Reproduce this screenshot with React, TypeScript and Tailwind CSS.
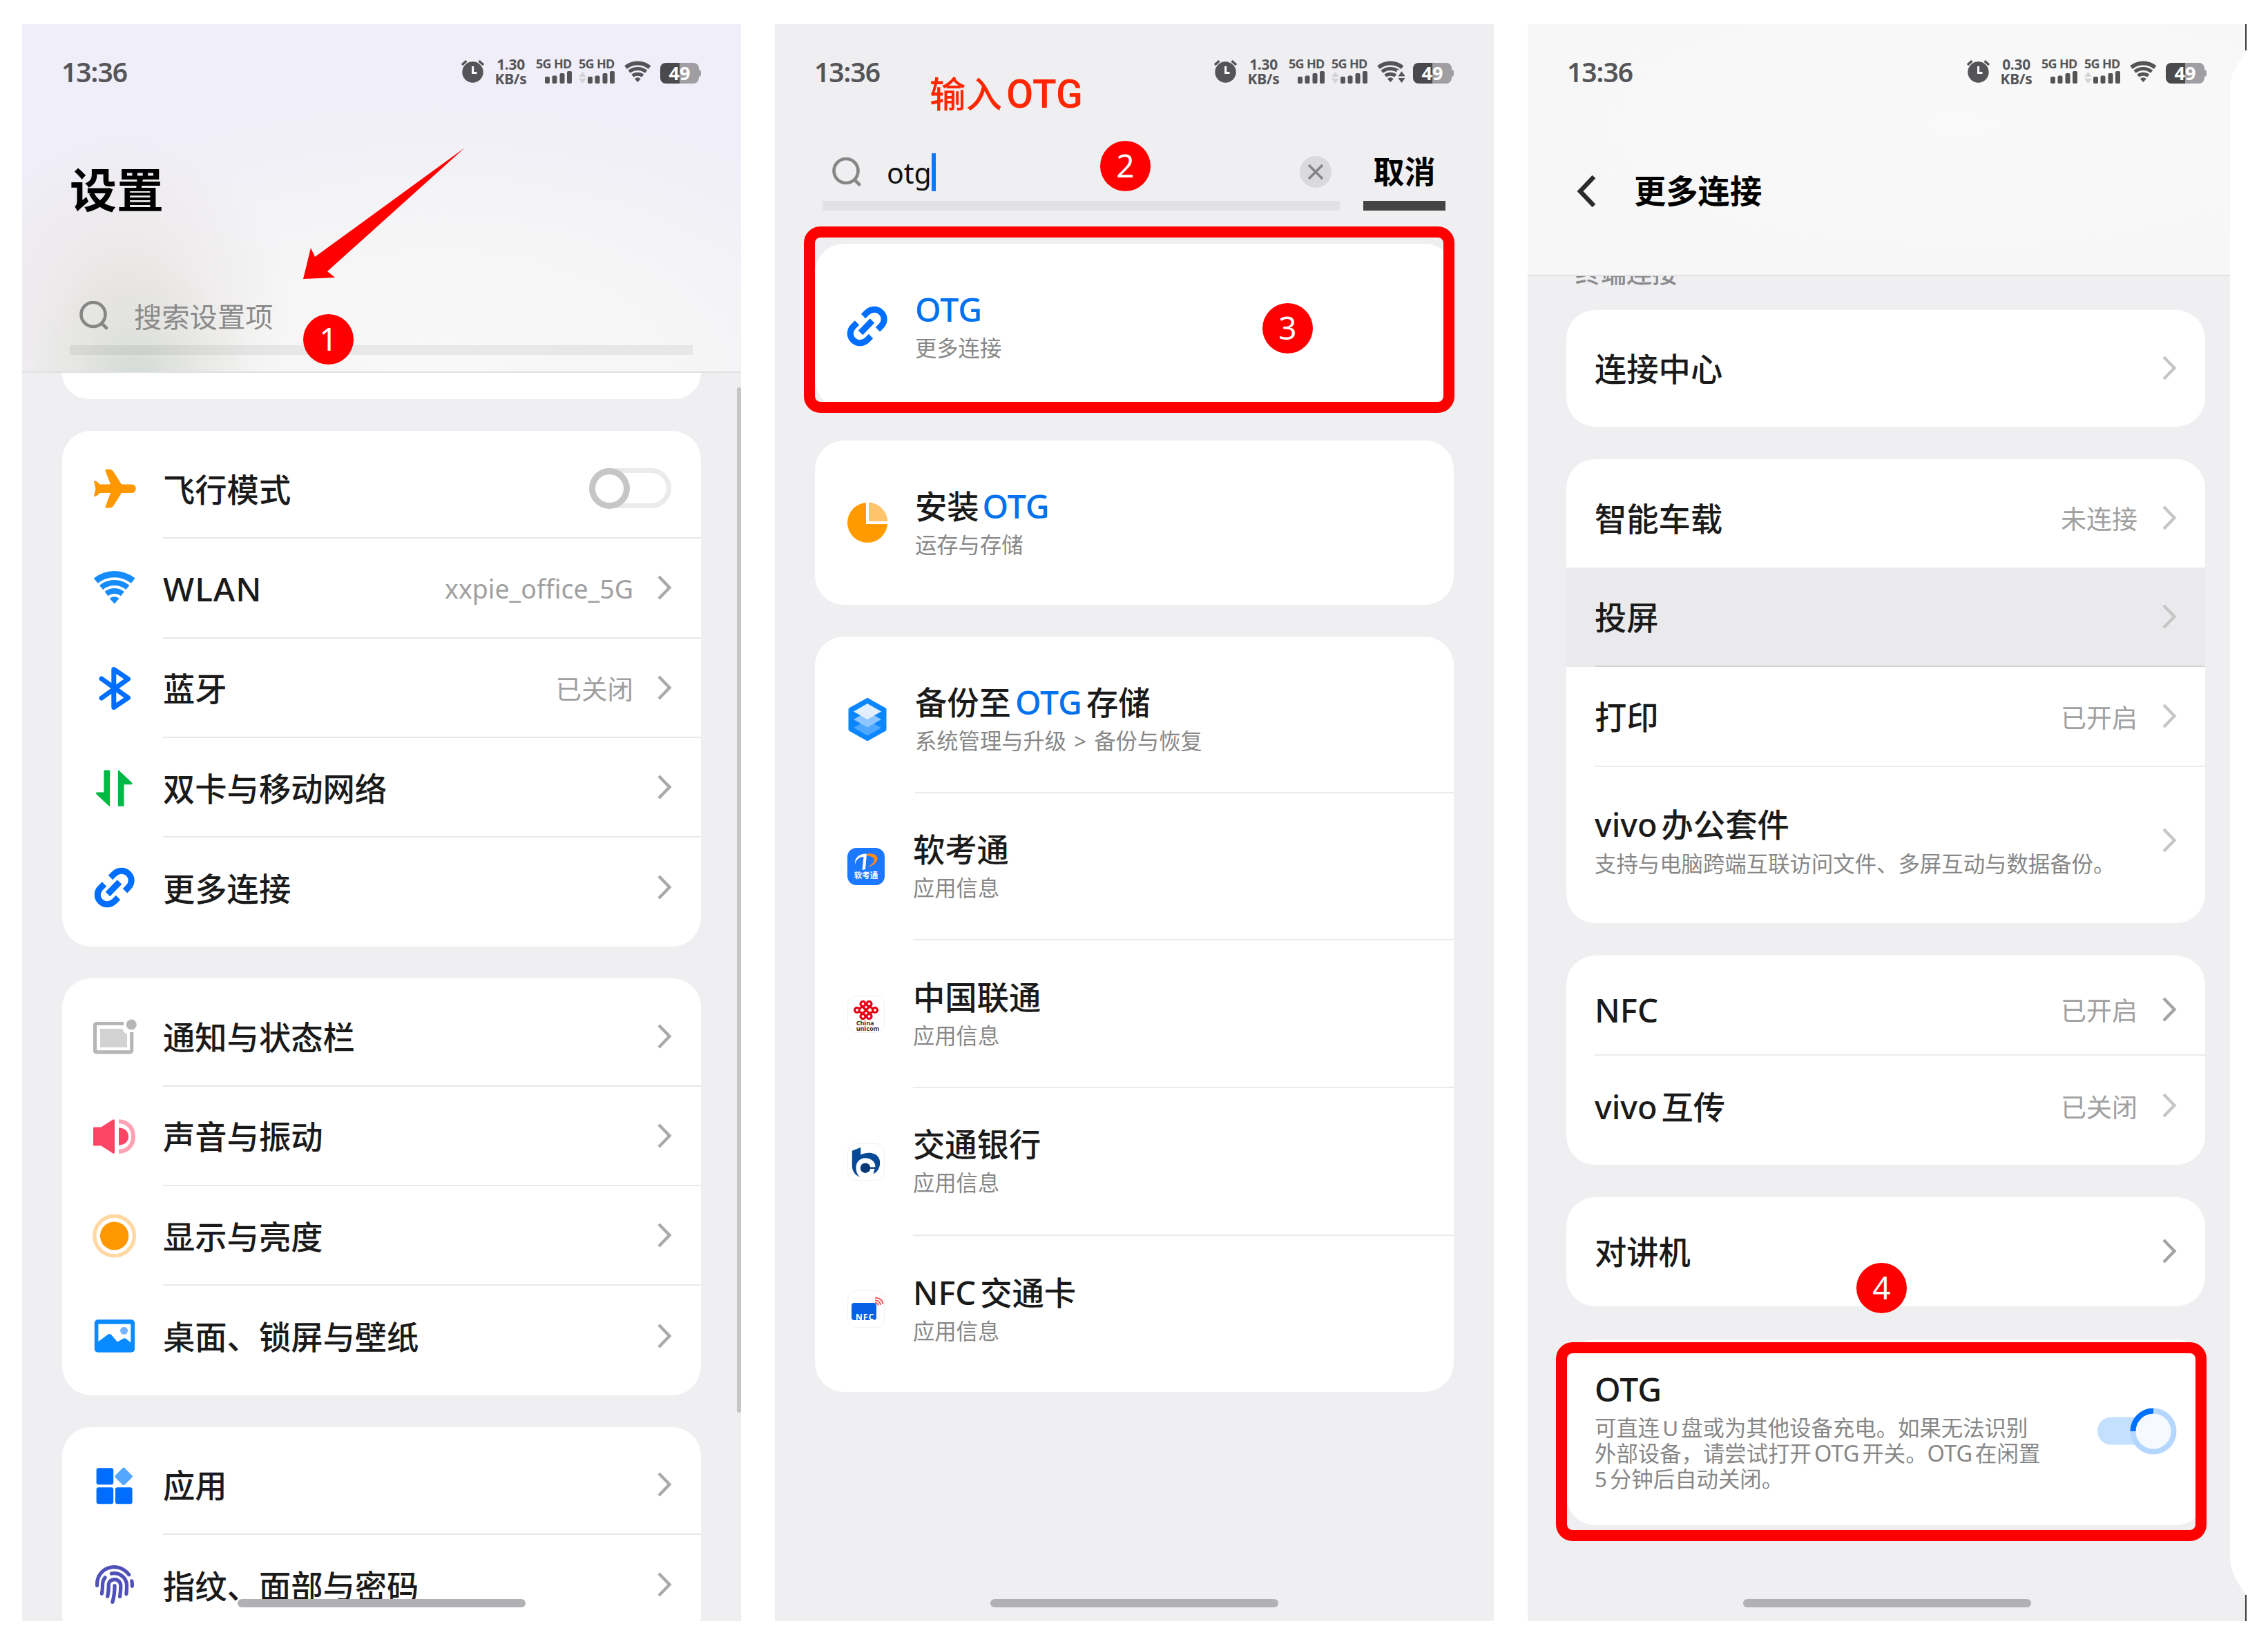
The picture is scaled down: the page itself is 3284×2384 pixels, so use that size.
import React from "react";
import { FaFingerprint } from "react-icons/fa";

type Kids = { children?: React.ReactNode };

/* ---------- shared glyphs ---------- */

function WifiShape() {
  return (
    <g fill="none" stroke="currentColor">
      <path d="M4.7 21.1A43 43 0 0 1 58.7 21.1" strokeWidth="9.2" />
      <path d="M12.5 30.8A30.5 30.5 0 0 1 50.9 30.8" strokeWidth="8" />
      <path d="M20.1 40.1A18.5 18.5 0 0 1 43.3 40.1" strokeWidth="8" />
      <path d="M25.4 46.9A10 10 0 0 1 38 46.9L31.7 54Z" fill="currentColor" strokeWidth="1" />
    </g>
  );
}

function Chevron({ tone = "text-[#a9a9a9]" }: { tone?: string }) {
  return (
    <svg viewBox="0 0 22 36" className={`h-[36px] w-[22px] shrink-0 ${tone}`} fill="none">
      <path d="M3 2L18.5 18L3 34" stroke="currentColor" strokeWidth="4.4" />
    </svg>
  );
}

function SearchIcon() {
  return (
    <svg viewBox="0 0 42 42" className="h-[42px] w-[42px] shrink-0" fill="none" stroke="#868686" strokeWidth="4.6">
      <circle cx="20" cy="19.5" r="17.5" />
      <path d="M31 31L40.5 40.5" />
    </svg>
  );
}

function Bars() {
  return (
    <svg viewBox="0 0 39 18" className="h-[18px] w-[39px]" fill="#555558">
      <rect x="0" y="8" width="7" height="10" rx="2" />
      <rect x="10.5" y="6.5" width="7" height="11.5" rx="2" />
      <rect x="21.5" y="3" width="7" height="15" rx="2" />
      <rect x="32" y="0" width="7" height="18" rx="2" />
    </svg>
  );
}

function Sim({ arrows }: { arrows?: boolean }) {
  return (
    <div className="flex w-[52px] flex-col items-end">
      <span className="w-[52px] text-[18px] leading-[18px] font-bold tracking-[-0.7px] whitespace-nowrap">5G HD</span>
      <div className="mt-[2px] flex items-end justify-end">
        {arrows && (
          <svg viewBox="0 0 11 17" className="mr-[2px] h-[17px] w-[11px]" fill="#d2d1d6">
            <path d="M5.5 0L11 7.2H0ZM5.5 17L11 9.8H0Z" />
          </svg>
        )}
        <Bars />
      </div>
    </div>
  );
}

function StatusBar({ speed, busyWifi }: { speed: string; busyWifi?: boolean }) {
  return (
    <div className="flex h-[88px] shrink-0 items-start justify-between pt-[48px] pr-[58px] pl-[57px] text-[#555558]">
      <span className="mt-[1px] text-[39px] leading-[40px] font-semibold tracking-[-1px]">13:36</span>
      <div className="flex h-[40px] items-start">
        <svg viewBox="0 0 33 33" className="mt-[4px] h-[33px] w-[33px]">
          <circle cx="16.5" cy="17.5" r="15.2" fill="currentColor" />
          <path d="M1 7L7.5 1.2M32 7L25.5 1.2" stroke="currentColor" strokeWidth="3.4" />
          <path d="M16.6 9V18.4H22.5" stroke="#fff" strokeWidth="3" fill="none" />
        </svg>
        <div className="ml-[16px] flex w-[45px] flex-col items-center text-[21px] leading-[20.5px] font-bold tracking-[-0.3px]">
          <span>{speed}</span>
          <span>KB/s</span>
        </div>
        <div className="ml-[14px]">
          <Sim />
        </div>
        <div className="ml-[10px]">
          <Sim arrows />
        </div>
        <svg viewBox="0 6 64 50" className="mt-[5px] ml-[13px] h-[32px] w-[41px]" preserveAspectRatio="none">
          <WifiShape />
          {busyWifi && (
            <g>
              <rect x="46" y="27" width="20" height="30" fill="#efeff1" />
              <path d="M57 30L65 41H49ZM57 56L65 45H49Z" fill="currentColor" />
            </g>
          )}
        </svg>
        <div className="mt-[8px] ml-[12px] flex items-center">
          <div className="flex h-[30px] w-[56px] items-center justify-center rounded-[8px] bg-[linear-gradient(90deg,#4a4a4c_50%,#9f9ea3_50%)] text-[27px] leading-[30px] font-bold text-white">
            49
          </div>
          <div className="h-[10px] w-[3px] rounded-r-[3px] bg-[#9f9ea3]" />
        </div>
      </div>
    </div>
  );
}

function HomeBar() {
  return <div className="absolute top-[2281px] left-[312px] h-[12px] w-[417px] rounded-full bg-[#b1b1b3]" />;
}

function Badge({ n, at }: { n: number; at: string }) {
  return (
    <div
      className={`absolute flex h-[73px] w-[73px] items-center justify-center rounded-full bg-[#ff0000] text-[46px] leading-[70px] text-white ${at}`}
    >
      <span className="-mt-[4px]">{n}</span>
    </div>
  );
}

/* ---------- setting icons (64 x 64) ---------- */

function Icon({ children }: Kids) {
  return (
    <svg viewBox="0 0 64 64" className="h-[64px] w-[64px] shrink-0" fill="none">
      {children}
    </svg>
  );
}

const PlaneIcon = () => (
  <Icon>
    <path
      fill="#ff9800"
      d="M62.7 31.8Q62.7 25.6 56 25.6H42L30 6.5Q28.2 3.8 24.5 3.8H20.5Q18 3.9 18.7 6.2L26 25.6H10.5L6 21.3Q4.3 20 1.900 21.200L4.500 31.800L1.900 42.400Q4.300 43.600 6 42.300L10.500 38H26L18.700 57.400Q18 59.700 20.500 59.800H24.500Q28.200 59.800 30 57.100L42 38H56Q62.700 38 62.700 31.800Z"
    />
  </Icon>
);
const WlanIcon = () => (
  <svg viewBox="0 0 64 64" className="h-[64px] w-[64px] shrink-0 text-[#158bfc]">
    <WifiShape />
  </svg>
);
const BluetoothIcon = () => (
  <Icon>
    <path
      d="M13 18L51.5 45.7L30.8 59.5V4.5L51.5 18.3L13 46"
      stroke="#006eff"
      strokeWidth="7"
      strokeLinejoin="round"
      strokeLinecap="round"
    />
  </Icon>
);
const DataIcon = () => (
  <Icon>
    <g fill="#00b843" stroke="#00b843" strokeWidth="1.5" strokeLinejoin="round">
      <path d="M17.2 7.3H24.4V58L6 40.8V39.3H17.2Z" />
      <path d="M37.6 7.3L56.5 25V26.5H44.8V58H37.6Z" />
    </g>
  </Icon>
);
const LinkIcon = () => (
  <Icon>
    <g stroke="#006eff" strokeWidth="9" strokeLinejoin="round">
      <path d="M26 18L31 13C37 7 46.5 6.8 52 12.5C57.5 18 57.5 26.5 52 32.2L47 37.2" />
      <path d="M17 27.5L11.5 33C5.8 38.7 5.8 47.2 11.5 52.7C17 58.2 26 58 31.5 52.5L37 47" />
      <path d="M22 42L39 24.5" />
    </g>
  </Icon>
);
const NoticeIcon = () => (
  <Icon>
    <path d="M45 12.5H6Q3.5 12.5 3.5 15V51Q3.5 53.8 6 53.8H54Q56.7 53.8 56.7 51V25" stroke="#b6b6b6" strokeWidth="5.2" />
    <path d="M11 20H43Q45 26 50 27.5V47H11Z" fill="#d2d2d2" />
    <circle cx="56.3" cy="14" r="7.5" fill="#b6b6b6" />
  </Icon>
);
const SoundIcon = () => (
  <Icon>
    <path d="M1 19.5Q1 18.5 2 18.5H12.5L29.5 7.5Q32 6.500 32 9V55Q32 57.600 29.500 56.500L12.500 45.500H2Q1 45.500 1 44.500Z" fill="#ff4566" />
    <path d="M38 19Q52 21 52 32Q52 43 38 45Z" fill="#ff4566" />
    <path d="M38 10.2C50 10.2 59 19 59 32C59 45 50 53.8 38 53.8" stroke="#ffa3b4" strokeWidth="6" />
  </Icon>
);
const DisplayIcon = () => (
  <Icon>
    <circle cx="31.6" cy="32" r="28.8" stroke="#ffd8a4" strokeWidth="5.4" />
    <circle cx="31.6" cy="32" r="20.6" fill="#ff9800" />
  </Icon>
);
const WallpaperIcon = () => (
  <Icon>
    <rect x="2.8" y="8.3" width="58.3" height="47.4" rx="5" fill="#0a8aff" />
    <path d="M8.4 14.7H55.4V41.6L48.5 36Q46.3 34.5 44 36L36 40.5L27 30Q24.5 28 22 30L8.4 40Z" fill="#fff" />
    <circle cx="45.6" cy="24.3" r="5.5" fill="#72b4ff" />
  </Icon>
);
const AppsIcon = () => (
  <Icon>
    <g fill="#006dff">
      <rect x="5.6" y="7.3" width="24.6" height="24" rx="3" />
      <rect x="5.6" y="35.2" width="24.6" height="24" rx="3" />
      <rect x="33" y="35.2" width="24.6" height="24" rx="3" />
    </g>
    <rect x="35.3" y="9.7" width="19.4" height="19.4" rx="2.5" transform="rotate(45 45 19.4)" fill="#54a6ff" />
  </Icon>
);
const FingerprintIcon = () => (
  <span className="flex h-[64px] w-[64px] shrink-0 items-center justify-center text-[56px] text-[#4f50b8]">
    <FaFingerprint />
  </span>
);
const PieIcon = () => (
  <Icon>
    <circle cx="32" cy="32" r="29" fill="#ff9a00" />
    <path d="M32 32V2.5A29.5 29.5 0 0 1 61.5 32Z" fill="#ffc36c" />
    <path d="M32 1V32H63" stroke="#fff" strokeWidth="4" />
  </Icon>
);
const BackupIcon = () => (
  <Icon>
    <path d="M32 3.5L57 17.5V46.5L32 60.5L7 46.5V17.5Z" fill="#0b86ff" stroke="#0b86ff" strokeWidth="5" strokeLinejoin="round" />
    <path d="M32 32.5L52 44L32 55.5L12 44Z" fill="#4ea8ff" />
    <path d="M32 20.5L52 32L32 43.5L12 32Z" fill="#8fc6ff" />
    <path d="M32 9L52 20.5L32 32L12 20.5Z" fill="#e2efff" />
  </Icon>
);

/* ---------- app icons (54 x 54) ---------- */

const RuankaoIcon = () => (
  <div className="flex h-[54px] w-[54px] flex-col items-center rounded-[13px] bg-[#1c78ff]">
    <svg viewBox="0 0 54 32" className="h-[32px] w-[54px]">
      <path d="M11 24C10 14 17 8.500 28 8.500L26 31L21.500 32L23.500 13C17 13 12.500 17 11 24Z" fill="#fff" />
      <path d="M29 8.500C39 7.500 45 11 43 18C41 23 35 27 29 28C36 24 40 20 38.500 16C37 12.500 33 12 28.500 12Z" fill="#ff8a1c" />
    </svg>
    <span className="mt-[1px] text-[11.5px] leading-[13px] font-bold whitespace-nowrap text-white">软考通</span>
  </div>
);
const UnicomIcon = () => (
  <div className="flex h-[54px] w-[54px] flex-col items-center rounded-[13px] border border-[#f1f1f1] bg-white">
    <svg viewBox="0 0 36 28" className="mt-[6px] h-[28px] w-[36px]" fill="none" stroke="#e60012" strokeWidth="3.2">
      <circle cx="13.5" cy="5" r="3.500" />
      <circle cx="22.5" cy="5" r="3.500" />
      <circle cx="13.5" cy="23" r="3.500" />
      <circle cx="22.5" cy="23" r="3.500" />
      <circle cx="5" cy="14" r="3.500" />
      <circle cx="31" cy="14" r="3.500" />
      <path d="M8 12L15 7.500M28 12L21 7.500M8 16L15 20.500M28 16L21 20.500M12 8L24 20M24 8L12 20" />
    </svg>
    <div className="mt-[1px] flex flex-col pl-[5px] text-[9px] leading-[7.5px] font-bold text-[#333]">
      <span>
        Ch<b className="text-[#e60012]">i</b>na
      </span>
      <span>
        un<b className="text-[#e60012]">i</b>com
      </span>
    </div>
  </div>
);
const BocomIcon = () => (
  <div className="h-[54px] w-[54px] rounded-[13px] border border-[#f1f1f1] bg-white">
    <svg viewBox="0 0 54 54" className="h-[52px] w-[52px]">
      <path
        fill="#064a96"
        d="M6 10L19 5V16C32 10 48 14 48 28C48 36 44 42 38 45L41 33C40 25 33 21 26 21C17 21 12 28 12 35C12 42 14 46 18 50C9 46 6 40 6 32Z"
      />
      <circle cx="26" cy="36" r="7.5" fill="#063a78" />
      <path d="M26 36H41" stroke="#063a78" strokeWidth="2.5" />
    </svg>
  </div>
);
const NfcIcon = () => (
  <div className="relative h-[54px] w-[54px] rounded-[13px] border border-[#f1f1f1] bg-white">
    <div className="mt-[17px] ml-[5px] flex h-[25px] w-[36px] items-end justify-center rounded-[4px] bg-[#0560e6]">
      <span className="-mb-[2px] ml-[3px] text-[12.5px] leading-[12px] font-bold tracking-[0.8px] text-white">NFC</span>
    </div>
    <svg viewBox="0 0 14 14" className="absolute top-[8px] left-[38px] h-[14px] w-[14px]" fill="none" stroke="#f25b62" strokeWidth="2">
      <path d="M1 2C7 1 12 5 12.5 11M1 5.5C5 5 8.5 8 9 12M1 9C3.5 9 5.5 10.5 5.8 13" />
    </svg>
  </div>
);

/* ---------- rows & cards ---------- */

function Card({ children, className = "" }: Kids & { className?: string }) {
  return <div className={`w-[925px] shrink-0 overflow-hidden rounded-[42px] bg-white ${className}`}>{children}</div>;
}

function SettingRow({
  icon,
  label,
  value,
  toggle,
  last,
}: {
  icon: React.ReactNode;
  label: React.ReactNode;
  value?: string;
  toggle?: boolean;
  last?: boolean;
}) {
  return (
    <div className="flex h-[144.3px] items-center pl-[44px]">
      {icon}
      <div className={`ml-[38px] flex h-full flex-1 items-center pr-[42px] ${last ? "" : "border-b-2 border-[#e8e8e8]"}`}>
        <span className="mt-[5px] flex-1 text-[46.3px] leading-[60px] font-medium text-[#1a1a1a]">{label}</span>
        {value && <span className="mt-[4px] mr-[34px] text-[37.5px] leading-[50px] text-[#a0a0a0]">{value}</span>}
        {toggle ? (
          <div className="mr-[1px] flex h-[58px] w-[119px] items-center rounded-full border-[7px] border-[#eaeaea]">
            <div className="-ml-[7px] h-[59px] w-[59px] shrink-0 rounded-full border-[9px] border-[#c6c6c6] bg-white" />
          </div>
        ) : (
          <Chevron />
        )}
      </div>
    </div>
  );
}

function ResultRow({ icon, title, sub, app, last }: { icon: React.ReactNode; title: React.ReactNode; sub: string; app?: boolean; last?: boolean }) {
  return (
    <div className="flex h-[213.7px] items-center">
      <div className={`flex shrink-0 justify-center ${app ? "w-[142px] pl-[6px]" : "w-[145px] pl-[6px]"}`}>{icon}</div>
      <div className={`flex h-full flex-1 flex-col justify-center ${last ? "" : "border-b-2 border-[#ebebeb]"}`}>
        <div className="-mt-[1px] text-[46.3px] leading-[60px] font-medium whitespace-nowrap text-[#1a1a1a]">{title}</div>
        <div className="mt-[4px] text-[31.3px] leading-[42px] whitespace-nowrap text-[#878787] [word-spacing:3px]">{sub}</div>
      </div>
    </div>
  );
}

function Hit({ className = "" }: { className?: string }) {
  return <span className={`text-[48px] text-[#0072ee] ${className}`}>OTG</span>;
}

function LinkRow({
  label,
  sub,
  value,
  h = "h-[144.4px]",
  tone = "text-[#c6c6c6]",
  active,
  line,
}: {
  label: React.ReactNode;
  sub?: string;
  value?: string;
  h?: string;
  tone?: string;
  active?: boolean;
  line?: boolean;
}) {
  return (
    <div className={`flex pl-[41px] ${h} ${active ? "bg-[#eaeaec]" : ""}`}>
      <div
        className={`flex flex-1 items-center pr-[41px] ${line ? (active ? "border-b-2 border-[#d3d3d6]" : "border-b-2 border-[#ececec]") : ""}`}
      >
        <div className="flex-1">
          <div className={`text-[46.3px] leading-[60px] font-medium whitespace-nowrap text-[#1a1a1a] ${sub ? "mt-[1px]" : "mt-[4px]"}`}>
            {label}
          </div>
          {sub && <div className="mt-[5px] text-[31.4px] leading-[42px] whitespace-nowrap text-[#878787]">{sub}</div>}
        </div>
        {value && <span className="mt-[5px] mr-[35px] text-[37px] leading-[50px] text-[#a0a0a0]">{value}</span>}
        <Chevron tone={tone} />
      </div>
    </div>
  );
}

/* ---------- screens ---------- */

function Screen({ children }: Kids) {
  return <section className="relative flex h-[2313px] w-[1041px] shrink-0 flex-col overflow-hidden bg-[#efeff1]">{children}</section>;
}

function SettingsScreen() {
  return (
    <Screen>
      <header className="flex h-[505px] shrink-0 flex-col border-b-2 border-[#e1e1e3] bg-[radial-gradient(ellipse_170px_150px_at_165px_505px,#d5dbd6_0%,#dfe2dd80_50%,#e8e8e600_100%),radial-gradient(ellipse_240px_260px_at_150px_420px,#e5e3df_0%,#e9e5e380_50%,#f0eef600_100%),radial-gradient(ellipse_760px_420px_at_600px_520px,#f8f8f8_0%,#f6f6f6_45%,#f3f2f6_70%,#f0eef800_100%)] bg-[#f0eef8]">
        <StatusBar speed="1.30" />
        <h1 className="mt-[119px] ml-[69px] text-[68px] leading-[66px] font-bold text-black">设置</h1>
        <div className="mt-[128px] ml-[83px] flex h-[42px] items-center">
          <SearchIcon />
          <span className="mt-[3px] ml-[37px] text-[40.3px] leading-[42px] text-[#8a8a8a]">搜索设置项</span>
        </div>
        <div className="mt-[22px] ml-[69px] h-[14px] w-[902px] bg-black/6" />
      </header>
      <div className="flex flex-1 flex-col items-center overflow-hidden">
        <div className="h-[38px] w-[925px] shrink-0 rounded-b-[38px] bg-white" />
        <Card className="mt-[46px] pt-[12px] pb-[14px]">
          <SettingRow icon={<PlaneIcon />} label="飞行模式" toggle />
          <SettingRow icon={<WlanIcon />} label={<span className="text-[48px] tracking-[1px]">WLAN</span>} value="xxpie_office_5G" />
          <SettingRow icon={<BluetoothIcon />} label="蓝牙" value="已关闭" />
          <SettingRow icon={<DataIcon />} label="双卡与移动网络" />
          <SettingRow icon={<LinkIcon />} label="更多连接" last />
        </Card>
        <Card className="mt-[46px] pt-[12px] pb-[14px]">
          <SettingRow icon={<NoticeIcon />} label="通知与状态栏" />
          <SettingRow icon={<SoundIcon />} label="声音与振动" />
          <SettingRow icon={<DisplayIcon />} label="显示与亮度" />
          <SettingRow icon={<WallpaperIcon />} label="桌面、锁屏与壁纸" last />
        </Card>
        <Card className="mt-[46px] pt-[12px] pb-[14px]">
          <SettingRow icon={<AppsIcon />} label="应用" />
          <SettingRow icon={<FingerprintIcon />} label="指纹、面部与密码" last />
        </Card>
      </div>
      <div className="absolute top-[526px] right-0 h-[1485px] w-[6px] rounded-full bg-[#c5c5c8]" />
      <HomeBar />
      <svg viewBox="0 0 240 196" className="absolute top-[176px] left-[404px] h-[196px] w-[240px]" fill="#ff0000">
        <path d="M237 3L20 161L14 148L3 193L49 191L38 182Z" />
      </svg>
      <Badge n={1} at="top-[420px] left-[407px]" />
    </Screen>
  );
}

function SearchScreen() {
  return (
    <Screen>
      <StatusBar speed="1.30" busyWifi />
      <div className="mt-[98px] ml-[69px] flex h-[84px] shrink-0">
        <div className="flex w-[749px] items-center border-b-[14px] border-[#e2e2e4] pr-[12px] pb-[14px] pl-[14px]">
          <SearchIcon />
          <span className="mt-[1px] ml-[37px] text-[41px] leading-[50px] text-[#111]">otg</span>
          <span className="h-[55px] w-[6px] bg-[#0a78ff]" />
          <svg viewBox="0 0 46 46" className="ml-auto h-[46px] w-[46px]">
            <circle cx="23" cy="23" r="23" fill="#dadadc" />
            <path d="M13 13L33 33M33 13L13 33" stroke="#858587" strokeWidth="3.6" />
          </svg>
        </div>
        <div className="ml-[34px] flex w-[119px] items-center justify-center border-b-[14px] border-[#444] pb-[14px] text-[45px] leading-[50px] font-bold text-black">
          取消
        </div>
      </div>
      <div className="mt-[48px] flex flex-col items-center gap-[46px]">
        <Card className="py-[12.5px]">
          <ResultRow icon={<LinkIcon />} title={<Hit />} sub="更多连接" last />
        </Card>
        <Card className="py-[12.5px]">
          <ResultRow
            icon={<PieIcon />}
            title={
              <>
                安装
                <Hit className="ml-[5px]" />
              </>
            }
            sub="运存与存储"
            last
          />
        </Card>
        <Card className="py-[12.5px]">
          <ResultRow
            icon={<BackupIcon />}
            title={
              <>
                备份至
                <Hit className="mx-[6px]" />
                存储
              </>
            }
            sub="系统管理与升级 > 备份与恢复"
          />
          <ResultRow app icon={<RuankaoIcon />} title="软考通" sub="应用信息" />
          <ResultRow app icon={<UnicomIcon />} title="中国联通" sub="应用信息" />
          <ResultRow app icon={<BocomIcon />} title="交通银行" sub="应用信息" />
          <ResultRow
            app
            icon={<NfcIcon />}
            title={
              <>
                <span className="mr-[6px] text-[47px]">NFC</span>交通卡
              </>
            }
            sub="应用信息"
            last
          />
        </Card>
      </div>
      <HomeBar />
      <div className="absolute top-[67px] left-[224px] flex items-baseline font-['Roboto','Noto_Sans_CJK_SC',sans-serif] text-[52.5px] leading-[70px] font-medium text-[#ff2600]">
        输入<span className="ml-[6px] text-[57px]">OTG</span>
      </div>
      <div className="absolute top-[293px] left-[42px] h-[270px] w-[942px] rounded-[24px] border-[16px] border-[#ff0000]" />
      <Badge n={2} at="top-[169px] left-[471px]" />
      <Badge n={3} at="top-[404px] left-[706px]" />
    </Screen>
  );
}

function Latin({ children, className = "mx-[4px]" }: Kids & { className?: string }) {
  return <span className={className}>{children}</span>;
}

function ConnectionsScreen() {
  return (
    <Screen>
      <header className="flex h-[365px] shrink-0 flex-col border-b-2 border-[#e1e1e3] bg-[radial-gradient(ellipse_at_60%_40%,#f9f9f9,#f7f7f7_70%)]">
        <StatusBar speed="0.30" />
        <div className="mt-[129px] ml-[71px] flex h-[50px] items-center">
          <svg viewBox="0 0 28 46" className="h-[46px] w-[28px]" fill="none">
            <path d="M25 2L5 23L25 44" stroke="#2b2b2b" strokeWidth="6.5" />
          </svg>
          <h1 className="ml-[55px] text-[46.3px] leading-[50px] font-bold text-black">更多连接</h1>
        </div>
      </header>
      <div className="flex flex-1 flex-col overflow-hidden pl-[56px]">
        <div className="-mt-[23px] ml-[13px] shrink-0 text-[37px] leading-[37px] font-medium text-[#8b8b8d]">终端连接</div>
        <Card className="mt-[35px] pt-[12px] pb-[13px]">
          <LinkRow label="连接中心" />
        </Card>
        <Card className="mt-[47px] pt-[12px] pb-[13px]">
          <LinkRow label="智能车载" value="未连接" />
          <LinkRow label="投屏" active line />
          <LinkRow label="打印" value="已开启" line />
          <LinkRow
            h="h-[213.7px]"
            label={
              <>
                <Latin className="mr-[6px] text-[46.8px]">vivo</Latin>办公套件
              </>
            }
            sub="支持与电脑跨端互联访问文件、多屏互动与数据备份。"
          />
        </Card>
        <Card className="mt-[47px] pt-[12px] pb-[13px]">
          <LinkRow h="h-[133px]" label={<span className="text-[47.5px]">NFC</span>} value="已开启" tone="text-[#a3a3a3]" line />
          <LinkRow
            label={
              <>
                <Latin className="mr-[6px] text-[46.8px]">vivo</Latin>互传
              </>
            }
            value="已关闭"
          />
        </Card>
        <Card className="mt-[47px] pt-[12px] pb-[13px]">
          <LinkRow h="h-[133px]" label="对讲机" tone="text-[#a3a3a3]" />
        </Card>
        <Card className="mt-[48px] flex h-[269px] justify-between pt-[44px] pr-[41px] pl-[41px]">
          <div className="text-[31.4px] leading-[37.3px] whitespace-nowrap text-[#878787]">
            <div className="mb-[9px] text-[48px] leading-[56px] font-medium text-[#1a1a1a]">OTG</div>
            <div>
              可直连<Latin>U</Latin>盘或为其他设备充电。如果无法识别
            </div>
            <div>
              外部设备，请尝试打开<Latin className="mx-[4px] text-[32.5px]">OTG</Latin>开关。
              <Latin className="mr-[4px] text-[32.5px]">OTG</Latin>在闲置
            </div>
            <div>
              <Latin className="mr-[4px]">5</Latin>分钟后自动关闭。
            </div>
          </div>
          <svg viewBox="0 0 115 70" className="mt-[54px] h-[70px] w-[115px] shrink-0" fill="none">
            <rect x="0" y="14.5" width="90" height="40" rx="20" fill="#c3e1ff" />
            <circle cx="81" cy="35" r="29.5" fill="#f6faff" stroke="#b5d7ff" strokeWidth="8" />
            <path d="M51.5 35A29.5 29.5 0 0 1 81 5.5" stroke="#0070ff" strokeWidth="8" />
          </svg>
        </Card>
      </div>
      <svg viewBox="0 0 24 2313" className="absolute top-0 right-0 h-[2313px] w-[24px]">
        <path d="M24 38C10 60 0 70 0 95V2220C0 2240 10 2258 24 2275Z" fill="#fff" />
        <path d="M23 0V38M23 2275V2313" stroke="#3a3a3a" strokeWidth="2" />
      </svg>
      <HomeBar />
      <Badge n={4} at="top-[1794px] left-[476px]" />
      <div className="absolute top-[1909px] left-[41px] h-[288px] w-[942px] rounded-[24px] border-[16px] border-[#ff0000]" />
    </Screen>
  );
}

export default function App() {
  return (
    <main className="flex h-[2384px] w-[3284px] gap-[49px] overflow-hidden bg-white pt-[35px] pl-[32px] font-['Noto_Sans','Noto_Sans_CJK_SC',sans-serif]">
      <SettingsScreen />
      <SearchScreen />
      <ConnectionsScreen />
    </main>
  );
}
